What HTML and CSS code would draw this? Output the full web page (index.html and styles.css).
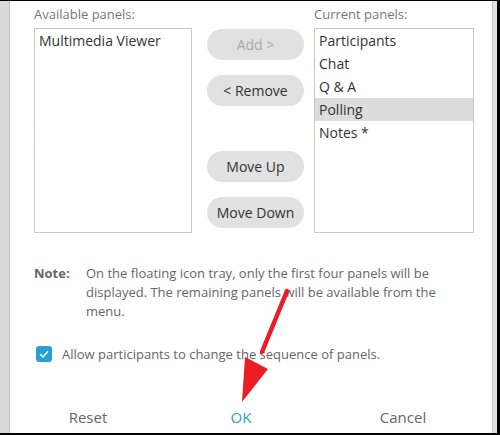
FILE: index.html
```html
<!DOCTYPE html>
<html lang="en">
<head>
    <meta charset="UTF-8">
    <meta name="viewport" content="width=device-width, initial-scale=1.0">
    <title>Panel Settings</title>
    <link rel="stylesheet" href="styles.css">
</head>
<body>
    <div class="screen">
        <div class="side-strip"></div>
        <div class="dialog">
            <div class="watermark">Sakshi</div>
            <div class="panels">
                <div class="panel-col">
                    <div class="panel-label">Available panels:</div>
                    <ul class="list-box">
                        <li>Multimedia Viewer</li>
                    </ul>
                </div>
                <div class="button-col">
                    <button class="pill" disabled>Add &gt;</button>
                    <button class="pill">&lt; Remove</button>
                    <button class="pill move-up">Move Up</button>
                    <button class="pill">Move Down</button>
                </div>
                <div class="panel-col right">
                    <div class="panel-label">Current panels:</div>
                    <ul class="list-box">
                        <li>Participants</li>
                        <li>Chat</li>
                        <li>Q &amp; A</li>
                        <li class="selected">Polling</li>
                        <li>Notes *</li>
                    </ul>
                </div>
            </div>

            <div class="note">
                <span class="note-title">Note:</span>
                <p>On the floating icon tray, only the first four panels will be displayed. The remaining panels will be available from the menu.</p>
            </div>

            <label class="check-row">
                <span class="check-box">
                    <svg width="12" height="12" viewBox="0 0 12 12"><path d="M2.2 6.2 L5 9 L10 3.2" fill="none" stroke="#fff" stroke-width="1.4"/></svg>
                </span>
                Allow participants to change the sequence of panels.
            </label>

            <div class="footer">
                <button class="link-btn">Reset</button>
                <button class="link-btn ok">OK</button>
                <button class="link-btn">Cancel</button>
            </div>
        </div>
        <div class="edge-strip"></div>

        <!-- annotation arrow on top of the screenshot -->
        <svg class="arrow" width="500" height="435" viewBox="0 0 500 435">
            <line x1="287" y1="291" x2="262" y2="352" stroke="#ee1c25" stroke-width="4.5" stroke-linecap="round"/>
            <polygon points="245,357 268,369 242,402" fill="#ee1c25"/>
        </svg>
    </div>
</body>
</html>
```

FILE: styles.css
```css
/* dialog screenshot */
body {
    margin: 0;
    font-family: 'Open Sans', 'Noto Sans', sans-serif;
    background-color: #fff;
}

.screen {
    position: relative;
    width: 500px;
    height: 435px;
    box-sizing: border-box;
    border-top: 1px solid #000;
    border-right: 3px solid #000;
    border-bottom: 2px solid #000;
    display: flex;
    overflow: hidden;
}

.side-strip {
    width: 9px;
    background-color: #dadada;
    border-right: 1px solid #c4c4c4;
}

.edge-strip {
    width: 4px;
    background-color: #e4e4e4;
    border-left: 1px solid #c8c8c8;
}

.dialog {
    position: relative;
    flex: 1;
    padding: 4px 0 0 24px;
    color: #666;
}

.watermark {
    position: absolute;
    left: 20px;
    top: 98px;
    font-size: 52px;
    color: #f5f5f5;
}

.panels {
    position: relative;
    display: flex;
}

.panel-col {
    width: 158px;
}

.panel-col.right {
    width: 160px;
}

.panel-label {
    font-size: 13px;
    line-height: 18px;
    height: 23px;
    color: #777;
}

.list-box {
    list-style: none;
    margin: 0;
    padding: 0;
    height: 203px;
    border: 1px solid #c8c8c8;
    background-color: #fff;
}

.list-box li {
    font-size: 14px;
    line-height: 23px;
    padding-left: 4px;
    color: #333;
}

.list-box li.selected {
    background-color: #dcdcdc;
}

.button-col {
    display: flex;
    flex-direction: column;
    gap: 15px;
    width: 97px;
    margin: 24px 10px 0 15px;
}

.pill {
    height: 31px;
    border: none;
    border-radius: 16px;
    background-color: #e1e1e1;
    font-family: inherit;
    font-size: 14px;
    color: #333;
    padding: 0;
}

.pill:disabled {
    color: #aaa;
}

.pill.move-up {
    margin-top: 30px;
}

.note {
    display: flex;
    margin-top: 31px;
    font-size: 13px;
    line-height: 19px;
}

.note-title {
    width: 52px;
    font-weight: bold;
    color: #666;
}

.note p {
    margin: 0;
    width: 360px;
}

.check-row {
    display: flex;
    align-items: center;
    gap: 10px;
    margin: 24px 0 0 2px;
    font-size: 13px;
    color: #666;
}

.check-box {
    display: flex;
    align-items: center;
    justify-content: center;
    width: 16px;
    height: 16px;
    border-radius: 3px;
    background-color: #2a9fd6;
}

.footer {
    display: grid;
    grid-template-columns: 156px 150px 174px;
    margin: 44px 0 0 -24px;
}

.link-btn {
    border: none;
    background: none;
    font-family: inherit;
    font-size: 15px;
    color: #666;
    padding: 0;
}

.link-btn.ok {
    color: #29a0d4;
}

.arrow {
    position: absolute;
    left: 0;
    top: -1px;
    pointer-events: none;
}
```
